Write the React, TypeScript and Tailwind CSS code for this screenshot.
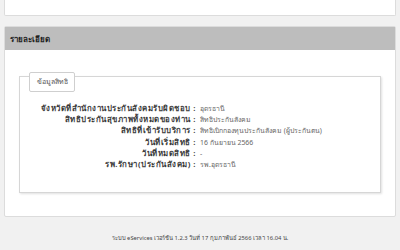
import React from "react";

const rows: [string, string][] = [
  ["จังหวัดที่สำนักงานประกันสังคมรับผิดชอบ :", "อุดรธานี"],
  ["สิทธิประกันสุขภาพทั้งหมดของท่าน :", "สิทธิประกันสังคม"],
  ["สิทธิที่เข้ารับบริการ :", "สิทธิเบิกกองทุนประกันสังคม (ผู้ประกันตน)"],
  ["วันที่เริ่มสิทธิ :", "16 กันยายน 2566"],
  ["วันที่หมดสิทธิ :", "-"],
  ["รพ.รักษา(ประกันสังคม) :", "รพ.อุดรธานี"],
];

export default function App() {
  return (
    <div
      className="w-[400px] h-[250px] overflow-hidden bg-[#f1f1f1] px-[4px] text-[#333]"
      style={{ fontFamily: '"Noto Sans", "Liberation Sans", sans-serif' }}
    >
      <div className="h-[16px] bg-white border border-t-0 border-[#dcdcdc] rounded-b-[2px]" />
      <div className="mt-[10px] bg-white border border-[#dcdcdc] rounded-[2px]">
        <div className="h-[23px] bg-[#bdbdbd] px-[5px] flex items-center text-[8px] font-bold text-[#222]">
          รายละเอียด
        </div>
        <div className="pl-[14px] pr-[14px] pt-[26px] pb-[23px]">
          <div className="relative border border-[#d6d6d6] shadow-[1px_1px_2px_rgba(0,0,0,0.12)] pt-[26px] pb-[22px]">
            <div className="absolute left-[9px] top-[-5px] w-[46px] h-[20px] bg-white border border-[#cfcfcf] rounded-[2px] flex items-center justify-center text-[7px] text-[#555]">
              ข้อมูลสิทธิ
            </div>
            <div className="grid grid-cols-[176px_1fr] gap-x-[4px]">
              {rows.map(([k, v]) => (
                <React.Fragment key={k}>
                  <div className="text-right text-[7.8px] tracking-[0.5px] leading-[11.2px] font-bold text-[#3a3a3a] whitespace-nowrap">
                    {k}
                  </div>
                  <div className="text-[6.9px] leading-[11.2px] text-[#666] whitespace-nowrap">{v}</div>
                </React.Fragment>
              ))}
            </div>
          </div>
        </div>
      </div>
      <div className="mt-[17px] text-center text-[5.8px] text-[#444]">
        ระบบ eServices เวอร์ชัน 1.2.3 วันที่ 17 กุมภาพันธ์ 2566 เวลา 16.04 น.
      </div>
    </div>
  );
}
